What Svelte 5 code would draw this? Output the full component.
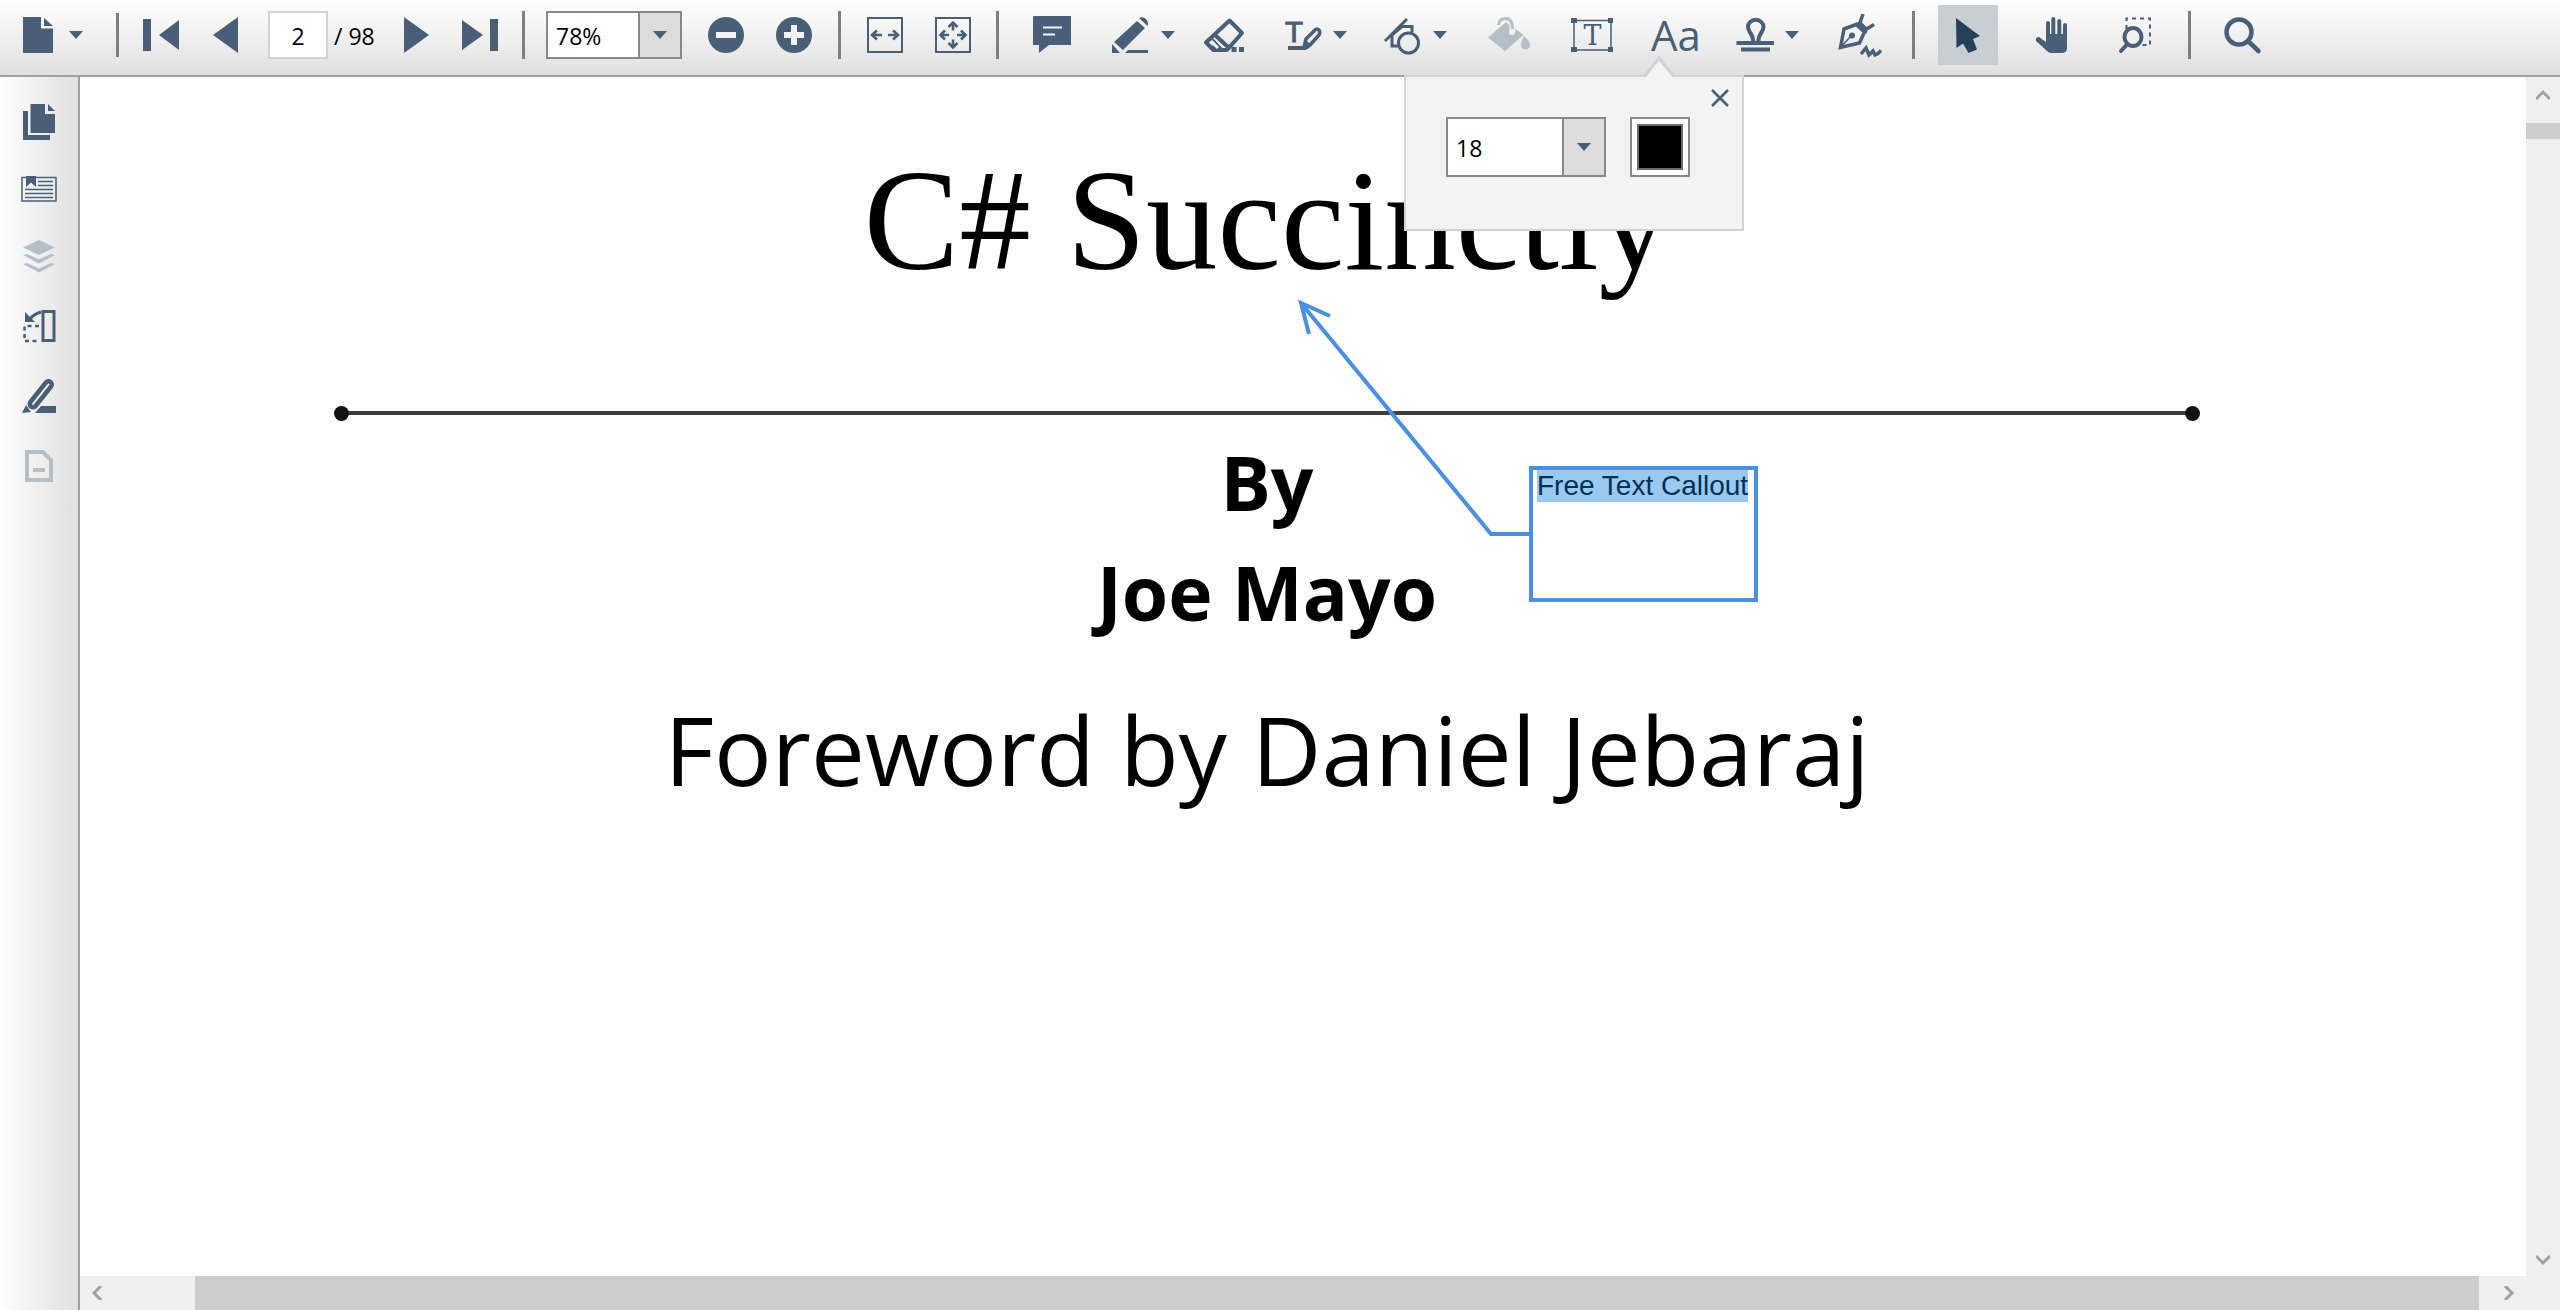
<script>
  import { onMount } from 'svelte';

  let pageNumber = $state('2');
  let zoom = $state('78%');
  let fontSize = $state('18');
  let calloutText = $state('Free Text Callout');
  let calloutBox;

  onMount(() => {
    calloutBox.focus();
    calloutBox.select();
  });
</script>

{#snippet caret()}
  <svg class="caret" viewBox="0 0 16 8" aria-hidden="true"><path d="M1 0h14L8 8z" /></svg>
{/snippet}

<div class="viewer">
  <header class="toolbar" role="toolbar" aria-label="Document tools">
    <button class="tool" aria-label="File">
      <svg viewBox="0 0 60 60"><path d="M15 12H33V23H45V48H15Z M36 13L45 21H36Z" /><path class="light" d="M34.5 12V22.5H45" /></svg>
    </button>
    <button class="drop" aria-label="File options">{@render caret()}</button>
    <span class="sep short g32"></span>
    <button class="tool g12" aria-label="First page">
      <svg viewBox="0 0 60 60"><path d="M11 14h8v32h-8z M47 15V45L27 30Z" /></svg>
    </button>
    <button class="tool g4" aria-label="Previous page">
      <svg viewBox="0 0 60 60"><path d="M42 12V48L17 30Z" /></svg>
    </button>
    <input class="page-input g12" aria-label="Page number" bind:value={pageNumber} />
    <span class="page-total">/ 98</span>
    <button class="tool g12" aria-label="Next page">
      <svg viewBox="0 0 60 60"><path d="M18 12V48L43 30Z" /></svg>
    </button>
    <button class="tool g4" aria-label="Last page">
      <svg viewBox="0 0 60 60"><path d="M12 15V45L33 30Z M40 14h8v32h-8z" /></svg>
    </button>
    <span class="sep g12"></span>
    <div class="combo zoom g20">
      <select aria-label="Zoom" bind:value={zoom}>
        <option>50%</option><option>78%</option><option>100%</option><option>200%</option>
      </select>
      <span class="combo-arrow">{@render caret()}</span>
    </div>
    <button class="tool g14" aria-label="Zoom out">
      <svg viewBox="0 0 60 60"><circle cx="30" cy="30" r="18" /><path class="cut" d="M20 27h20v6H20z" /></svg>
    </button>
    <button class="tool g8" aria-label="Zoom in">
      <svg viewBox="0 0 60 60"><circle cx="30" cy="30" r="18" /><path class="cut" d="M20 27h7v-7h6v7h7v6h-7v7h-6v-7h-7z" /></svg>
    </button>
    <span class="sep g14"></span>
    <button class="tool g12" aria-label="Fit width">
      <svg class="line" viewBox="0 0 60 60"><path stroke-width="2" d="M14 13h34v34H14z" /><path stroke-width="2.6" d="M18 30H28M23 25.5L18 30L23 34.5M34 30H44M39 25.5L44 30L39 34.5" /></svg>
    </button>
    <button class="tool g8" aria-label="Fit page">
      <svg class="line" viewBox="0 0 60 60"><path stroke-width="2" d="M14 13h34v34H14z" /><path stroke-width="2.6" d="M18.500 30H27M23 25.500L18.500 30L23 34.500M35 30H43.500M39 25.500L43.500 30L39 34.500M31 18V25.500M26.500 22L31 17.500L35.500 22M31 34.500V42M26.500 38L31 42.500L35.500 38" /></svg>
    </button>
    <span class="sep g14"></span>
    <button class="tool g22" aria-label="Comment">
      <svg viewBox="0 0 60 60"><path d="M12 11H49V40H27L17 48V40H11V12Z" /><path class="light" d="M21 22.500H40M21 29.500H33" /></svg>
    </button>
    <button class="tool g18" aria-label="Highlight">
      <svg viewBox="0 0 60 60"><path d="M37 16L45 23L23 45L14 37ZM39 13Q43 11 46 14Q49 18 47.500 21ZM12 39L20 48H12ZM28 45H48V48H25Z" /></svg>
    </button>
    <button class="drop" aria-label="Highlight options">{@render caret()}</button>
    <button class="tool g18" aria-label="Eraser">
      <svg class="line" viewBox="0 0 60 60"><path stroke-width="4" stroke-linejoin="round" d="M35.500 15.500L48 28L33 45H19.500L12 37.500ZM21 30L34 42" /><path stroke-width="2" d="M16 33L27 45" /><path stroke="none" class="solid" d="M17 31L31 46H22L19 43ZM37.500 42h5v5h-5zM45 42h5v5h-5z" /><path class="light" stroke-width="3" d="M17 36L24 43" /></svg>
    </button>
    <button class="tool g18" aria-label="Text markup">
      <svg class="line" viewBox="0 0 60 60"><text class="glyph sans" x="22" y="37" text-anchor="middle">T</text><path stroke-width="4" d="M16 43H34" /><path stroke-width="3.500" stroke-linejoin="round" d="M32 42L34 34L43 25Q45 23 47 25Q48.500 27 47 30L38 40Z" /><path class="solid" stroke="none" d="M31 45L33 35L40 40L36 44Z" /></svg>
    </button>
    <button class="drop" aria-label="Text markup options">{@render caret()}</button>
    <button class="tool g24" aria-label="Shapes">
      <svg class="line" viewBox="0 0 60 60"><g stroke-width="3"><path d="M13 36L35 14M27 41H20V30L30 21.500H40V27" /><circle cx="36.500" cy="38" r="10" /></g></svg>
    </button>
    <button class="drop" aria-label="Shape options">{@render caret()}</button>
    <button class="tool g32 off" aria-label="Fill color" disabled>
      <svg viewBox="0 0 60 60"><path d="M8 32.500L26 17L43.500 30L25 46Z" /><path class="halo" d="M32.500 27V21Q32 13 26 13.500" /><path class="handle" d="M18.500 20Q19 13.500 26 13.500Q33 14 32.500 26" /><circle cx="32" cy="27" r="3" class="cut" /><path d="M44 31Q50 36 50 40A4.500 4.500 0 0 1 41 40Q41 36 44 31Z" /></svg>
    </button>
    <button class="tool g22" aria-label="Text box">
      <svg class="line" viewBox="0 0 60 60"><path stroke-width="1.500" d="M12 15.500H49V45H12Z" /><path class="solid" stroke="none" d="M9 13h6v5H9zM46 13h5v5h-5zM9 42h6v5H9zM46 42h5v5h-5z" /><text class="glyph serif" x="30.500" y="40" text-anchor="middle">T</text></svg>
    </button>
    <div class="font-tool g24">
      <button class="tool letters" aria-label="Font" aria-expanded="true">Aa</button>
      <section class="popup" aria-label="Font properties">
        <svg class="notch" viewBox="0 0 34 21" aria-hidden="true"><path d="M2 21L17 2L32 21" /></svg>
        <button class="close" aria-label="Close"><svg viewBox="0 0 18 18"><path d="M1 1L17 17M17 1L1 17" /></svg></button>
        <div class="combo size">
          <select aria-label="Font size" bind:value={fontSize}>
            <option>12</option><option>14</option><option>18</option><option>24</option>
          </select>
          <span class="combo-arrow">{@render caret()}</span>
        </div>
        <button class="swatch" aria-label="Font color"><span></span></button>
      </section>
    </div>
    <button class="tool g18" aria-label="Stamp">
      <svg class="line" viewBox="0 0 60 60"><path stroke-width="4" d="M12.500 38H50M17 44.500H46M29 37C30 30 24 27 24 22A7.500 7 0 0 1 39.500 22C39.500 27 33.500 30 34.500 37" /></svg>
    </button>
    <button class="drop" aria-label="Stamp options">{@render caret()}</button>
    <button class="tool g32" aria-label="Signature">
      <svg class="line" viewBox="0 0 60 60"><path stroke-width="3.500" d="M12 24L24 19.500L32.500 27L27.500 38L8.500 42.500ZM24 19L29 19L34 24L33 28M31 9L27.500 19M42 19.500L33 25" /><path stroke-width="1.500" d="M8 43L19 31" /><circle class="solid" stroke="none" cx="20" cy="30.500" r="3" /><path stroke-width="3.500" d="M29 49L34 43L37 50L41 46L43 50L46 48.500L49 45.500" /></svg>
    </button>
    <span class="sep g20"></span>
    <button class="tool g22 active" aria-label="Select" aria-pressed="true">
      <svg viewBox="0 0 60 60"><path stroke-linejoin="round" d="M18 13L42 31L35 34L39 44.500L30.500 48L25 38.500L18.500 43Z" /></svg>
    </button>
    <button class="tool g24" aria-label="Pan">
      <svg viewBox="0 0 60 60"><path d="M24 37V18a2 2 0 0 1 4 0V29H29.300V14a2 2 0 0 1 4 0V29H35.300V16a2 2 0 0 1 4 0V29H41V20a2 2 0 0 1 4 0V43Q45 48 40 48H29Q27 48 25 46L14 36Q13 32 17 32Z" /></svg>
    </button>
    <button class="tool g24" aria-label="Marquee zoom">
      <svg class="line" viewBox="0 0 60 60"><path stroke-width="2" stroke-dasharray="4 4" d="M20.500 24V13.500H44V40H34" /><ellipse cx="27" cy="32" rx="8.500" ry="9" stroke-width="4" /><path stroke-width="4" stroke-linecap="round" d="M20.500 40L15 46" /></svg>
    </button>
    <span class="sep g22"></span>
    <button class="tool g20" aria-label="Search">
      <svg class="line" viewBox="0 0 60 60"><circle cx="27" cy="27" r="12.500" stroke-width="4.500" /><path stroke-width="4.500" stroke-linecap="round" d="M36.500 36.500L46.500 46" /></svg>
    </button>
  </header>

  <div class="body">
    <nav class="sidebar" aria-label="Panels">
      <div class="panel-group">
        <button class="tool" aria-label="Thumbnails">
          <svg viewBox="0 0 60 60"><path d="M14 19h5v24h22v5H14z M21.500 12H36V22H46V41H21.500Z M39 12L46 19H39Z" /></svg>
        </button>
        <button class="tool" aria-label="Bookmarks">
          <svg class="line" viewBox="0 0 60 60"><path stroke-width="1.500" d="M13 18.500H47V42H13ZM29 22.500H44M29 26.500H44M16 30.500H44M16 34.500H44M16 38.500H44" /><path class="solid" stroke="none" d="M17 17H27V28L22 23.500L17 28Z" /></svg>
        </button>
        <button class="tool off" aria-label="Layers" disabled>
          <svg viewBox="0 0 60 60"><path d="M14 21.500L30 14L46 21.500L30 29Z M14 29L18 28L30 33.500L42 28L46 29L30 37.500Z M14 38L18 37L30 42.500L42 37L46 38L30 46.500Z" /></svg>
        </button>
      </div>
      <div class="panel-group loose">
        <button class="tool" aria-label="Organize pages">
          <svg class="line" viewBox="0 0 60 60"><path stroke-width="3" d="M34 15.500H45V44.500H34Z" /><path stroke-width="2.500" stroke-dasharray="4 3.500" d="M30 30H15.500V45H30" /><path stroke-width="3" d="M32 16Q25 18 21 23" /><path class="solid" stroke="none" d="M16 16V26H26Z" /></svg>
        </button>
        <button class="tool" aria-label="Annotations">
          <svg class="line" viewBox="0 0 60 60"><path stroke-width="11" stroke-linecap="round" d="M24 38L39.500 18.500" /><path class="light thin" stroke-linecap="round" d="M24 38L39.500 18.500" /><path class="solid" stroke="none" d="M17 39L22 46L13 47ZM32 40H47V47H26Z" /></svg>
        </button>
        <button class="tool off" aria-label="Redaction" disabled>
          <svg class="line" viewBox="0 0 60 60"><path stroke-width="4" d="M18 16H34L42 24V44H18ZM24 34H36" /></svg>
        </button>
      </div>
    </nav>

    <main class="canvas">
      <article class="sheet">
        <h1>C# Succinctly</h1>
        <div class="rule"></div>
        <p class="author">By</p>
        <p class="author">Joe Mayo</p>
        <p class="foreword">Foreword by Daniel Jebaraj</p>
        <div class="annotation">
          <svg class="leader" viewBox="0 0 236 240" aria-hidden="true"><path d="M5 5L195 236H236M13 36L5 5L34 18" /></svg>
          <textarea aria-label="Callout text" spellcheck="false" bind:this={calloutBox} bind:value={calloutText}></textarea>
        </div>
      </article>
      <div class="scroll vertical">
        <button aria-label="Scroll up"><svg viewBox="0 0 14 14"><path d="M0 12L7 5L14 12" /></svg></button>
        <span class="thumb"></span>
        <span class="track"></span>
        <button aria-label="Scroll down"><svg viewBox="0 0 14 14"><path d="M0 4L7 11L14 4" /></svg></button>
      </div>
      <div class="scroll horizontal">
        <button aria-label="Scroll left"><svg viewBox="0 0 14 14"><path d="M11 0L4 7L11 14" /></svg></button>
        <span class="thumb"></span>
        <button aria-label="Scroll right"><svg viewBox="0 0 14 14"><path d="M3 0L10 7L3 14" /></svg></button>
      </div>
    </main>
  </div>
</div>

<style>
  :global(body) { margin: 0; overflow: hidden; }
  * { box-sizing: border-box; }
  .viewer {
    --ink: #485f77;
    --edge: #a0a0a0;
    display: flex;
    flex-direction: column;
    height: 100vh;
    background: #fefefe;
    color: #000;
    font-family: "Open Sans", "Noto Sans", sans-serif;
    font-size: 23px;
  }
  button { padding: 0; border: 0; background: none; color: inherit; font: inherit; }
  svg { display: block; fill: var(--ink); }

  .toolbar {
    position: relative;
    z-index: 2;
    display: flex;
    align-items: center;
    flex: none;
    padding: 5px 8px;
    padding-bottom: 10px;
    border-bottom: 2px solid var(--edge);
    background: linear-gradient(#fff, #e0e0e0);
  }
  .tool { flex: none; width: 60px; height: 60px; }
  .tool svg { width: 60px; height: 60px; }
  .tool.off { --ink: #b5bfc9; }
  .tool.active { --ink: #27405a; background: #c7cfd2; }
  .line { fill: none; stroke: var(--ink); }
  .line .solid, .line .glyph { fill: var(--ink); stroke: none; }
  .light { fill: none; stroke: #f4f4f4; stroke-width: 2; }
  .line .light { stroke-width: 3; }
  .line .thin { stroke-width: 2; }
  .cut { fill: #f2f2f2; }
  .halo { fill: none; stroke: #f2f2f2; stroke-width: 6; }
  .handle { fill: none; stroke: var(--ink); stroke-width: 3; }
  .glyph { font-size: 27px; }
  .line .glyph.sans { stroke: var(--ink); stroke-width: 1; font-family: "DejaVu Sans", sans-serif; }
  .glyph.serif { font-family: "DejaVu Serif", serif; }
  .drop { display: flex; align-items: center; justify-content: center; flex: none; width: 16px; height: 60px; }
  .caret { width: 16px; height: 8px; }
  .sep { flex: none; width: 3px; margin-right: 1px; height: 48px; background: #7f7f7f; }
  .sep.short { height: 44px; }
  .g4 { margin-left: 4px; }
  .g8 { margin-left: 8px; }
  .g12 { margin-left: 12px; }
  .g14 { margin-left: 14px; }
  .g18 { margin-left: 18px; }
  .g20 { margin-left: 20px; }
  .g22 { margin-left: 22px; }
  .g24 { margin-left: 24px; }
  .g32 { margin-left: 32px; }

  .page-input {
    width: 60px;
    height: 48px;
    padding: 2px 0 0;
    border: 2px solid #d3d3d3;
    background: #fff;
    font: inherit;
    text-align: center;
    outline: 0;
  }
  .page-total { flex: none; width: 46px; padding: 2px 0 0 6px; white-space: nowrap; }

  .combo { display: grid; grid-template-columns: 1fr 42px; flex: none; border: 2px solid #888; background: #fff; }
  .combo.zoom { width: 136px; height: 48px; }
  .combo.size { width: 160px; height: 60px; }
  .combo select {
    grid-area: 1 / 1 / 2 / 3;
    appearance: none;
    padding: 2px 0 0 8px;
    border: 0;
    background: none;
    color: inherit;
    font: inherit;
    outline: 0;
  }
  .combo-arrow {
    grid-area: 1 / 2 / 2 / 3;
    display: flex;
    align-items: center;
    justify-content: center;
    border-left: 2px solid #888;
    background: #ddd;
    pointer-events: none;
  }

  .font-tool { position: relative; flex: none; width: 60px; }
  .letters { display: block; color: var(--ink); font-size: 42px; line-height: 60px; text-align: center; }
  .popup {
    position: absolute;
    top: 70px;
    left: -242px;
    display: flex;
    gap: 24px;
    width: 340px;
    height: 156px;
    padding: 40px;
    border: 2px solid #d3d3d3;
    background: #f3f3f3;
  }
  .notch { position: absolute; top: -21px; left: 236px; width: 34px; height: 21px; }
  .notch path { fill: #f3f3f3; stroke: #d3d3d3; stroke-width: 3; }
  .close { position: absolute; top: 12px; right: 13px; }
  .close svg { width: 18px; height: 18px; stroke: var(--ink); stroke-width: 2.5; }
  .swatch { width: 60px; height: 60px; padding: 5px; border: 2px solid #888; background: #fff; }
  .swatch span { display: block; height: 46px; border: 2px solid #6b6b6b; background: #000; }

  .body { display: flex; flex: 1; min-height: 0; }
  .sidebar {
    display: flex;
    flex-direction: column;
    align-items: center;
    gap: 10px;
    flex: none;
    width: 80px;
    padding-top: 15px;
    border-right: 2px solid var(--edge);
    background: linear-gradient(90deg, #fff, #e0e0e0);
  }
  .panel-group { display: flex; flex-direction: column; gap: 7px; }
  .panel-group.loose { gap: 10px; }

  .canvas { display: grid; grid-template: 1fr 34px / 1fr 34px; flex: 1; min-width: 0; background: #efefef; }
  .sheet { position: relative; padding: 74px 72px 0 0; overflow: hidden; background: #fefefe; text-align: center; }
  h1 { margin: 0; font: 400 143px/140px "Liberation Serif", serif; }
  .rule {
    display: flex;
    align-items: center;
    justify-content: space-between;
    width: 1866px;
    max-width: 100%;
    height: 16px;
    margin: 114px auto 0;
    background: linear-gradient(#3c3c3c, #3c3c3c) center / 1852px 4px no-repeat;
  }
  .rule::before, .rule::after { content: ""; width: 15px; height: 15px; border-radius: 8px; background: #111; }
  p { margin: 0; }
  .author { font-size: 75px; font-weight: 700; line-height: 110px; }
  .rule + .author { margin-top: 6px; }
  .foreword { margin-top: 32px; font-size: 96px; line-height: 140px; }

  .annotation { position: absolute; top: 221px; left: 50%; margin-left: -7px; width: 462px; height: 304px; }
  .leader { position: absolute; top: 0; left: 0; width: 236px; height: 240px; fill: none; stroke: #4a90e2; stroke-width: 4; }
  textarea {
    position: absolute;
    right: 0;
    bottom: 0;
    width: 229px;
    height: 136px;
    padding: 0 4px;
    border: 4px solid #4a90e2;
    background: none;
    color: #000;
    font: 28px/32px "Liberation Sans", sans-serif;
    white-space: nowrap;
    overflow: hidden;
    resize: none;
    outline: 0;
  }
  textarea::selection { background: #99c9ef; color: #022f55; }

  .scroll { display: flex; background: #efefef; }
  .scroll button { display: flex; align-items: center; justify-content: center; flex: none; width: 34px; height: 34px; }
  .scroll svg { width: 14px; height: 14px; fill: none; stroke: #a0a0a0; stroke-width: 3; }
  .thumb { background: #cdcdcd; }
  .vertical { flex-direction: column; }
  .vertical .thumb { height: 16px; margin-top: 12px; }
  .track { flex: 1; }
  .horizontal .thumb { flex: 1; margin: 0 13px 0 81px; }
</style>
